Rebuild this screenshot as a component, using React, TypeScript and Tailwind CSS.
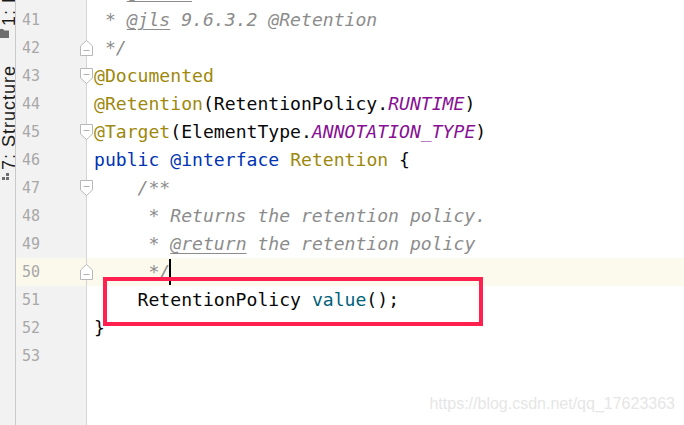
import React from "react";

type Part = { t: string; c?: string };

const C = "text-[#8c8c8c] italic";
const CU = "text-[#8c8c8c] italic underline decoration-[#8c8c8c] underline-offset-[3px]";
const A = "text-[#9e880d]";
const K = "text-[#0033b3]";
const P = "text-[#871094] italic";
const N = "text-[#080808]";
const M = "text-[#00627a]";

type Line = { n?: number; parts: Part[]; marker?: "start" | "end"; hl?: boolean; cursor?: boolean };

const lines: Line[] = [
  { n: 40, parts: [{ t: " * ", c: C }, { t: "@since", c: CU }, { t: " 1.5", c: C }] },
  { n: 41, parts: [{ t: " * ", c: C }, { t: "@jls", c: CU }, { t: " 9.6.3.2 @Retention", c: C }] },
  { n: 42, parts: [{ t: " */", c: C }], marker: "end" },
  { n: 43, parts: [{ t: "@Documented", c: A }], marker: "start" },
  { n: 44, parts: [{ t: "@Retention", c: A }, { t: "(RetentionPolicy.", c: N }, { t: "RUNTIME", c: P }, { t: ")", c: N }] },
  { n: 45, parts: [{ t: "@Target", c: A }, { t: "(ElementType.", c: N }, { t: "ANNOTATION_TYPE", c: P }, { t: ")", c: N }], marker: "start" },
  { n: 46, parts: [{ t: "public", c: K }, { t: " ", c: N }, { t: "@interface", c: K }, { t: " ", c: N }, { t: "Retention", c: A }, { t: " {", c: N }] },
  { n: 47, parts: [{ t: "    /**", c: C }], marker: "start" },
  { n: 48, parts: [{ t: "     * Returns the retention policy.", c: C }] },
  { n: 49, parts: [{ t: "     * ", c: C }, { t: "@return", c: CU }, { t: " the retention policy", c: C }] },
  { n: 50, parts: [{ t: "     */", c: C }], marker: "end", hl: true, cursor: true },
  { n: 51, parts: [{ t: "    RetentionPolicy ", c: N }, { t: "value", c: M }, { t: "();", c: N }] },
  { n: 52, parts: [{ t: "}", c: N }] },
  { n: 53, parts: [] },
];

function FoldStart() {
  return (
    <svg width="13" height="16" viewBox="0 0 13 16" className="absolute right-[-7px] top-1/2 -translate-y-1/2 z-10">
      <path d="M0.5 0.5 H12.5 V10 L6.5 15.5 L0.5 10 Z" fill="#ffffff" stroke="#b9b9b9" />
      <path d="M3.5 6.5 H9.5" stroke="#b0b0b0" />
    </svg>
  );
}

function FoldEnd() {
  return (
    <svg width="13" height="16" viewBox="0 0 13 16" className="absolute right-[-7px] top-1/2 -translate-y-1/2 z-10">
      <path d="M0.5 6 L6.5 0.5 L12.5 6 V15.5 H0.5 Z" fill="#ffffff" stroke="#b9b9b9" />
      <path d="M3.5 10.5 H9.5" stroke="#b0b0b0" />
    </svg>
  );
}

export default function App() {
  return (
    <div className="relative w-[684px] h-[425px] overflow-hidden flex bg-white">
      {/* tool window strip */}
      <div className="w-[16px] shrink-0 h-full bg-[#f2f2f2] border-r border-[#c9c9c9] overflow-hidden flex flex-col font-['Liberation_Sans',sans-serif] text-[18px] tracking-[1px] text-[#1a1a1a]">
        <div className="h-[26px] w-[15px] shrink-0 flex flex-col justify-end items-end">
          <span className="[writing-mode:vertical-rl] rotate-180 whitespace-nowrap leading-[20px] mr-[-4px]">1: Project</span>
        </div>
        <svg width="15" height="11" viewBox="0 0 15 11" className="mt-[2px] shrink-0">
          <path d="M-2 1 H3 L4.5 2.5 H9 V10 H-2 Z" fill="#6e6e6e" />
        </svg>
        <div className="h-[131px] w-[15px] shrink-0 flex flex-col justify-end items-end">
          <span className="[writing-mode:vertical-rl] rotate-180 whitespace-nowrap leading-[20px] mr-[-4px]">7: Structure</span>
        </div>
        <svg width="15" height="9" viewBox="0 0 15 9" className="mt-[2px] shrink-0">
          <rect x="6" y="1" width="3" height="3" fill="#6e6e6e" />
          <rect x="2" y="5" width="3" height="3" fill="#6e6e6e" />
          <rect x="6" y="5" width="3" height="3" fill="#6e6e6e" />
        </svg>
      </div>

      {/* editor */}
      <div className="flex-1 flex flex-col h-full">
        <div className="-mt-[22px] flex flex-col">
          {lines.map((l, i) => (
            <div key={i} className={"flex h-[28px] " + (l.hl ? "bg-[#fcfaed]" : "")}>
              <div
                className={
                  "relative w-[71px] shrink-0 border-r border-[#d5d5d5] pl-[6px] font-['DejaVu_Sans_Mono',monospace] text-[15px] leading-[28px] text-[#a8a8a8] " +
                  (l.hl ? "bg-[#fbf9ec]" : "bg-[#f2f2f2]")
                }
              >
                {l.n}
                {l.marker === "start" && <FoldStart />}
                {l.marker === "end" && <FoldEnd />}
              </div>
              <div className="flex-1 pl-[7px] font-['DejaVu_Sans_Mono',monospace] text-[18.1px] leading-[28px] whitespace-pre">
                {l.parts.map((p, j) => (
                  <span key={j} className={p.c}>
                    {p.t}
                  </span>
                ))}
                {l.cursor && <span className="inline-block align-top w-[2px] h-[26px] mt-[1px] -ml-[1px] bg-black" />}
              </div>
            </div>
          ))}
        </div>
        <div className="flex flex-1">
          <div className="w-[71px] shrink-0 border-r border-[#d5d5d5] bg-[#f2f2f2]" />
          <div className="flex-1" />
        </div>
      </div>

      {/* highlight box */}
      <div className="absolute left-[103px] top-[277px] w-[380px] h-[49px] border-[4px] border-[#ff2050]" />

      {/* watermark */}
      <div className="absolute right-[9px] bottom-[9px] font-['Liberation_Sans',sans-serif] text-[16px] text-[#e6e6e6]">
        https://blog.csdn.net/qq_17623363
      </div>
    </div>
  );
}
